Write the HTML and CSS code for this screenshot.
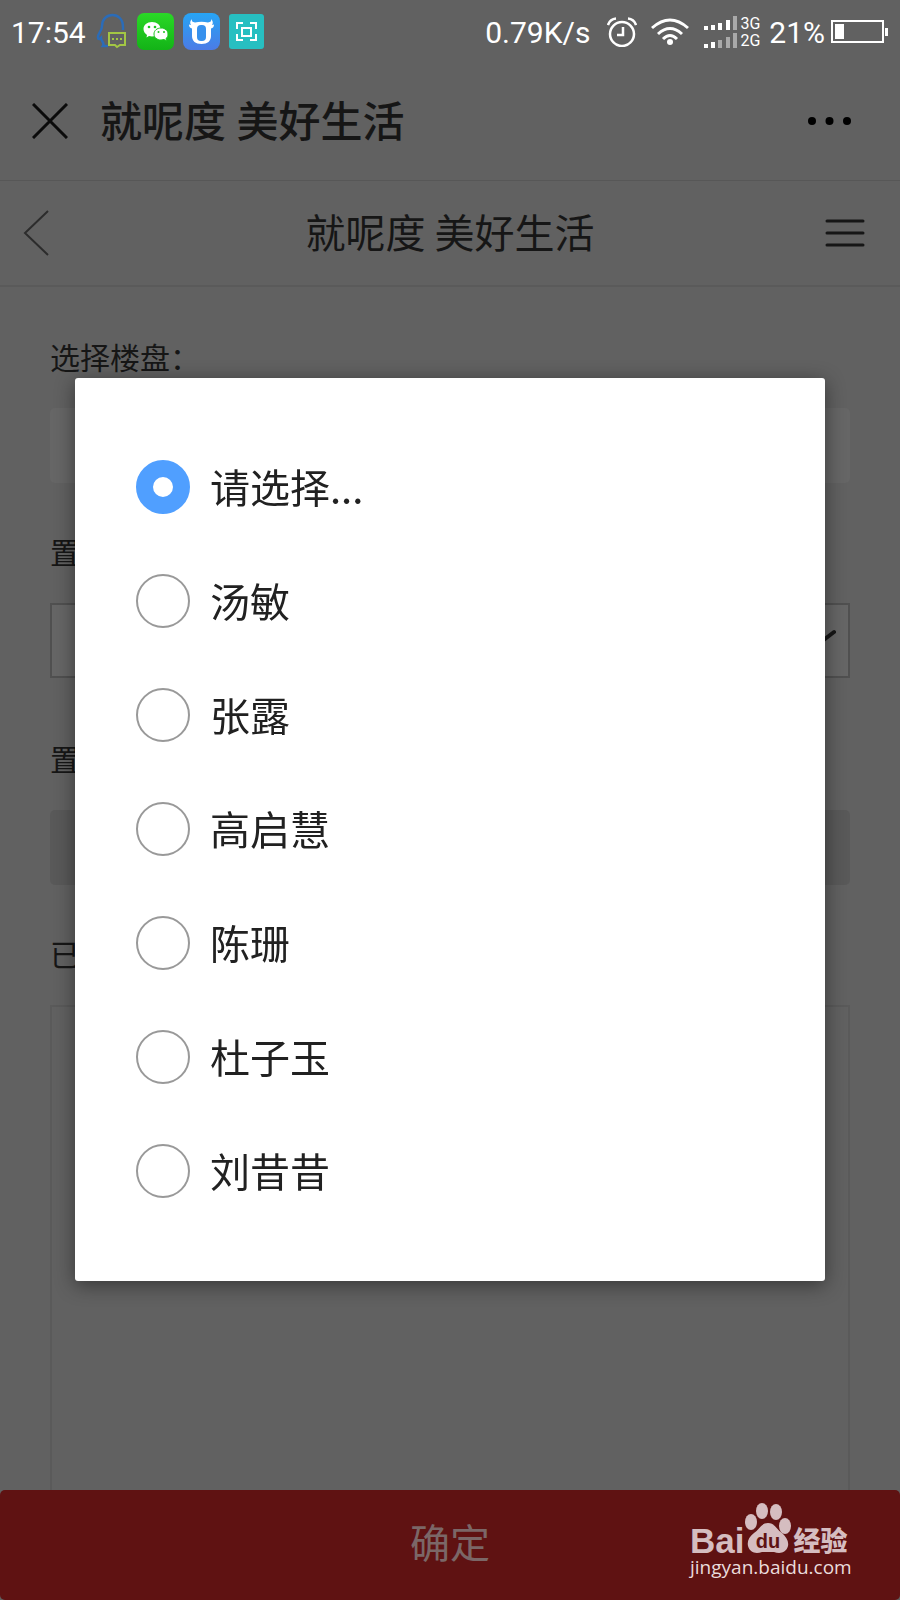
FILE: index.html
```html
<!DOCTYPE html>
<html lang="zh-CN">
<head>
<meta charset="utf-8">
<meta name="viewport" content="width=device-width, initial-scale=1">
<title>就呢度 美好生活</title>
<link rel="stylesheet" href="styles.css">
</head>
<body>
<div class="screen">
  <div class="status">
    <div class="status-left">
      <span class="clock">17:54</span>
      <svg class="qq" width="32" height="36" viewBox="0 0 32 36" fill="none">
        <path d="M27 17V14C27 6 22 2 16.500 2S6 6 6 13C6 18 2 20 2 24C2 27 4 26 5 25C5 28 9 30 7 33H12" stroke="#2b6cb8" stroke-width="2.500"/>
        <path d="M13 20H29V32H24L21 34L19 32H13Z" stroke="#a3c644" stroke-width="2"/>
        <path d="M16 26H18M20 26H22M24 26H26" stroke="#a3c644" stroke-width="2"/>
      </svg>
      <svg width="37" height="37" viewBox="0 0 37 37">
        <defs><linearGradient id="wechat" x2="0" y2="1"><stop stop-color="#2ad827"/><stop offset="1" stop-color="#13b317"/></linearGradient></defs>
        <rect width="37" height="37" rx="7" fill="url(#wechat)"/>
        <path d="M15 9C10 9 6.500 12 6.500 16C6.500 18.500 8 20.500 10 22L9.500 24.500L12 23L15 23.500C20 23.500 23.500 20 23.500 16S20 9 15 9Z" fill="#fff"/>
        <path d="M24 15C20 15 17 17.500 17 21S20 27 24 27L27 26.500L29.500 28L29 25.500C30.500 24.500 31 23 31 21C31 17.500 28 15 24 15Z" fill="#fff" stroke="#1dc51f"/>
        <g fill="#1dc51f"><circle cx="12" cy="14" r="1.300"/><circle cx="18" cy="14" r="1.300"/><circle cx="21.500" cy="19" r="1"/><circle cx="27" cy="19" r="1"/></g>
      </svg>
      <svg width="37" height="37" viewBox="0 0 37 37">
        <defs><linearGradient id="bull" x2="0" y2="1"><stop stop-color="#27a5f5"/><stop offset="1" stop-color="#4b7be6"/></linearGradient></defs>
        <rect width="37" height="37" rx="8" fill="url(#bull)"/>
        <path d="M9 6Q8 9 12 9.500Q18.500 8 25 9.500Q29 9 28 6Q31 9 29 12L31 11.500Q31 15 28 15.500V23C28 28 24.500 31 18.500 31S9 28 9 23V15.500Q6 15 6 11.500L8 12Q6 9 9 6Z" fill="#fff"/>
        <rect x="14" y="12" width="9" height="16" rx="4" fill="#3791ed"/>
      </svg>
      <svg width="35" height="35" viewBox="0 0 35 35" fill="none" stroke="#fff" stroke-width="2">
        <rect width="35" height="35" rx="3" fill="#27bfc1" stroke="none"/>
        <path d="M8 15V9H14M21 9H27V15M27 20V26H21M14 26H8V20"/><rect x="13" y="14" width="9" height="8"/>
      </svg>
    </div>
    <div class="status-right">
      <span class="speed">0.79K/s</span>
      <svg class="alarm" width="30" height="30" viewBox="0 0 30 30" fill="none" stroke="#fff" stroke-width="2.500">
        <circle cx="15" cy="17" r="12"/><path d="M16 10V18H10"/><path d="M1 8Q3 2 9 1.500M21 1.500Q27 2 29 8"/>
      </svg>
      <svg class="wifi" width="38" height="28" viewBox="0 0 38 28" fill="none" stroke="#fff" stroke-width="3">
        <path d="M1 10Q19-6 37 10M7 16Q19 5 31 16M12 21Q19 14 26 21"/><circle cx="19" cy="24" r="3" fill="#fff" stroke="none"/>
      </svg>
      <svg class="signal" width="33" height="33" viewBox="0 0 33 33" fill="#fff">
        <path d="M0 10H4V14H0ZM7 9H11V14H7ZM14 7H18V14H14ZM22 4H26V14H22Z"/><path d="M0 28H4V32H0ZM7 26H11V32H7Z"/>
        <path d="M29 0H33V14H29ZM14 24H18V32H14ZM22 21H26V32H22ZM29 17H33V32H29Z" fill="#a9a9a9"/>
      </svg>
      <span class="net"><span>3G</span><span>2G</span></span>
      <span class="percent">21%</span>
      <svg class="battery" width="58" height="24" viewBox="0 0 58 24">
        <rect x="1" y="1" width="51" height="21" fill="none" stroke="#fff" stroke-width="2"/><path d="M4 4H13V19H4ZM54 8H57V16H54Z" fill="#fff"/>
      </svg>
    </div>
  </div>

  <header class="titlebar">
    <button class="icon-btn" aria-label="关闭">
      <svg width="36" height="36" viewBox="0 0 36 36" stroke="#0b0b0b" stroke-width="3"><path d="M1 1L35 35M35 1L1 35"/></svg>
    </button>
    <h1 class="title">就呢度 美好生活</h1>
    <button class="icon-btn" aria-label="更多">
      <svg width="43" height="8" viewBox="0 0 43 8"><circle cx="4" cy="4" r="4"/><circle cx="21.500" cy="4" r="4"/><circle cx="39" cy="4" r="4"/></svg>
    </button>
  </header>

  <nav class="navbar">
    <button class="icon-btn" aria-label="返回">
      <svg width="26" height="46" viewBox="0 0 26 46" fill="none" stroke="#2c2c2c" stroke-width="2"><path d="M25 1L2 23L25 45"/></svg>
    </button>
    <h2 class="nav-title">就呢度 美好生活</h2>
    <button class="icon-btn" aria-label="菜单">
      <svg width="40" height="28" viewBox="0 0 40 28" stroke="#161616" stroke-width="3" stroke-linecap="round"><path d="M2 2H38M2 14H38M2 26H38"/></svg>
    </button>
  </nav>

  <form class="form">
    <div class="group">
      <label for="estate">选择楼盘：</label>
      <input id="estate" class="field light" type="text">
    </div>
    <div class="group">
      <label for="consultant">置</label>
      <div class="select-wrap">
        <select id="consultant" class="field outlined"></select>
        <svg class="chevron" width="30" height="18" viewBox="0 0 30 18" fill="none" stroke="#161616" stroke-width="4" stroke-linecap="round"><path d="M2 2L15 13L28 3"/></svg>
      </div>
    </div>
    <div class="group spaced">
      <label for="phone">置</label>
      <input id="phone" class="field dark" type="text">
    </div>
    <div class="group grow">
      <label for="chosen">已</label>
      <textarea id="chosen" class="notes"></textarea>
    </div>
  </form>

  <footer class="footer">
    <button class="submit">确定</button>
    <div class="watermark">
      <div class="mark-row">
        <span class="mark-latin">Bai</span>
        <svg width="48" height="51" viewBox="0 0 48 51" fill="#d5bdc0">
          <ellipse cx="7" cy="20" rx="6" ry="8"/><ellipse cx="18" cy="9" rx="6" ry="8"/><ellipse cx="32" cy="10" rx="6" ry="8"/><ellipse cx="41" cy="24" rx="6" ry="8"/>
          <path d="M24 21C17 21 15 28 10 31C5 35 3 39 4 44C6 51 12 52 18 50H30C36 52 42 51 44 44C45 39 42 35 38 31C33 28 31 21 24 21Z"/>
          <text class="mark-du" x="24" y="46" text-anchor="middle">du</text>
        </svg>
        <span class="mark-cjk">经验</span>
      </div>
      <span class="mark-url">jingyan.baidu.com</span>
    </div>
  </footer>
</div>

<div class="overlay">
  <div class="dialog" role="dialog" aria-label="请选择">
    <label class="option"><input type="radio" name="person" checked><span>请选择...</span></label>
    <label class="option"><input type="radio" name="person"><span>汤敏</span></label>
    <label class="option"><input type="radio" name="person"><span>张露</span></label>
    <label class="option"><input type="radio" name="person"><span>高启慧</span></label>
    <label class="option"><input type="radio" name="person"><span>陈珊</span></label>
    <label class="option"><input type="radio" name="person"><span>杜子玉</span></label>
    <label class="option"><input type="radio" name="person"><span>刘昔昔</span></label>
  </div>
</div>
</body>
</html>
```

FILE: styles.css
```css
* { box-sizing: border-box; }
body {
  margin: 0;
  background: #616161;
  color: #161616;
  font-family: Roboto, "Noto Sans CJK SC", sans-serif;
}
svg { display: block; flex: none; }
.screen { min-height: 100vh; display: flex; flex-direction: column; }

.status {
  height: 64px;
  padding: 0 11px;
  display: flex;
  justify-content: space-between;
  align-items: center;
  color: #fff;
  font-size: 30px;
  line-height: 36px;
}
.status-left, .status-right { display: flex; align-items: center; }
.status-left { gap: 9px; padding-bottom: 2px; }
.clock { padding-top: 4px; }
.qq { margin: 0 0 0 1px; }
.speed, .percent { padding-top: 2px; }
.alarm { margin-left: 17px; }
.wifi { margin-left: 14px; }
.signal { margin-left: 15px; }
.net {
  display: flex;
  flex-direction: column;
  margin: 0 9px 0 3px;
  font-size: 16px;
  line-height: 17px;
}
.battery { margin-left: 6px; }

.icon-btn { padding: 0; border: 0; background: none; }
.titlebar {
  height: 117px;
  padding: 0 49px 3px 32px;
  display: flex;
  align-items: center;
  border-bottom: 1px solid #575757;
}
.title {
  flex: 1;
  margin: 0 0 0 32px;
  padding-top: 5px;
  font: 500 42px/60px Roboto, "Noto Sans CJK SC", sans-serif;
}
.navbar {
  height: 106px;
  padding: 0 35px 0 23px;
  display: grid;
  grid-template-columns: 52px 1fr 40px;
  align-items: center;
  justify-items: center;
  border-bottom: 2px solid #5a5a5a;
}
.navbar .icon-btn:first-child { justify-self: start; }
.navbar .icon-btn:last-child { justify-self: end; }
.nav-title {
  margin: 0;
  padding-bottom: 4px;
  font: 400 40px/56px "Noto Sans CJK SC", sans-serif;
}

.form {
  flex: 1;
  padding: 47px 50px 0;
  display: flex;
  flex-direction: column;
  gap: 46px;
}
.group { display: flex; flex-direction: column; gap: 30px; }
.group label { font: 400 30px/44px "Noto Sans CJK SC", sans-serif; }
.spaced { margin-top: 12px; }
.grow { flex: 1; }
.field {
  display: block;
  width: 100%;
  height: 75px;
  border: 0;
  border-radius: 5px;
  appearance: none;
}
.light { background: #666; }
.dark { background: #595959; }
.outlined { background: #666; border: 2px solid #505050; border-radius: 0; }
.select-wrap { position: relative; }
.chevron { position: absolute; right: 14px; top: 26px; }
.notes {
  flex: 1;
  width: 100%;
  border: 2px solid #5a5a5a;
  border-bottom: 0;
  background: #616161;
  resize: none;
}

.footer { position: relative; }
.submit {
  display: block;
  width: 100%;
  height: 110px;
  padding: 0 0 8px;
  border: 0;
  border-radius: 5px;
  background: #5f1212;
  color: #7b6767;
  font: 400 40px/56px "Noto Sans CJK SC", sans-serif;
}
.watermark { position: absolute; right: 50px; bottom: 25px; width: 160px; }
.mark-row { display: flex; align-items: baseline; color: #d5bdc0; }
.mark-latin { font: bold 35px/36px "Liberation Sans", sans-serif; }
.mark-du { font: bold 20px "Liberation Sans", sans-serif; fill: #5f1212; }
.mark-cjk { align-self: flex-end; margin: 0 0 6px 1px; font: 900 27px/27px "Noto Sans CJK SC", sans-serif; }
.mark-url { display: block; color: #eadcdc; font: 400 19px/16px "Open Sans", sans-serif; }

.overlay {
  position: fixed;
  inset: 0;
  padding: 58px 75px 0;
  display: flex;
  align-items: center;
}
.dialog {
  width: 100%;
  padding: 52px 61px 53px;
  border-radius: 3px;
  background: #fff;
  box-shadow: 0 4px 20px rgba(0, 0, 0, .45);
}
.option {
  height: 114px;
  display: flex;
  align-items: center;
  gap: 20px;
  color: #212121;
  font: 400 40px/56px "Noto Sans CJK SC", sans-serif;
}
.option span { padding-bottom: 1px; }
.option input {
  appearance: none;
  flex: none;
  width: 54px;
  height: 54px;
  margin: 0;
  border: 2px solid #999;
  border-radius: 50%;
}
.option input:checked { border: 17px solid #509fff; }
```
